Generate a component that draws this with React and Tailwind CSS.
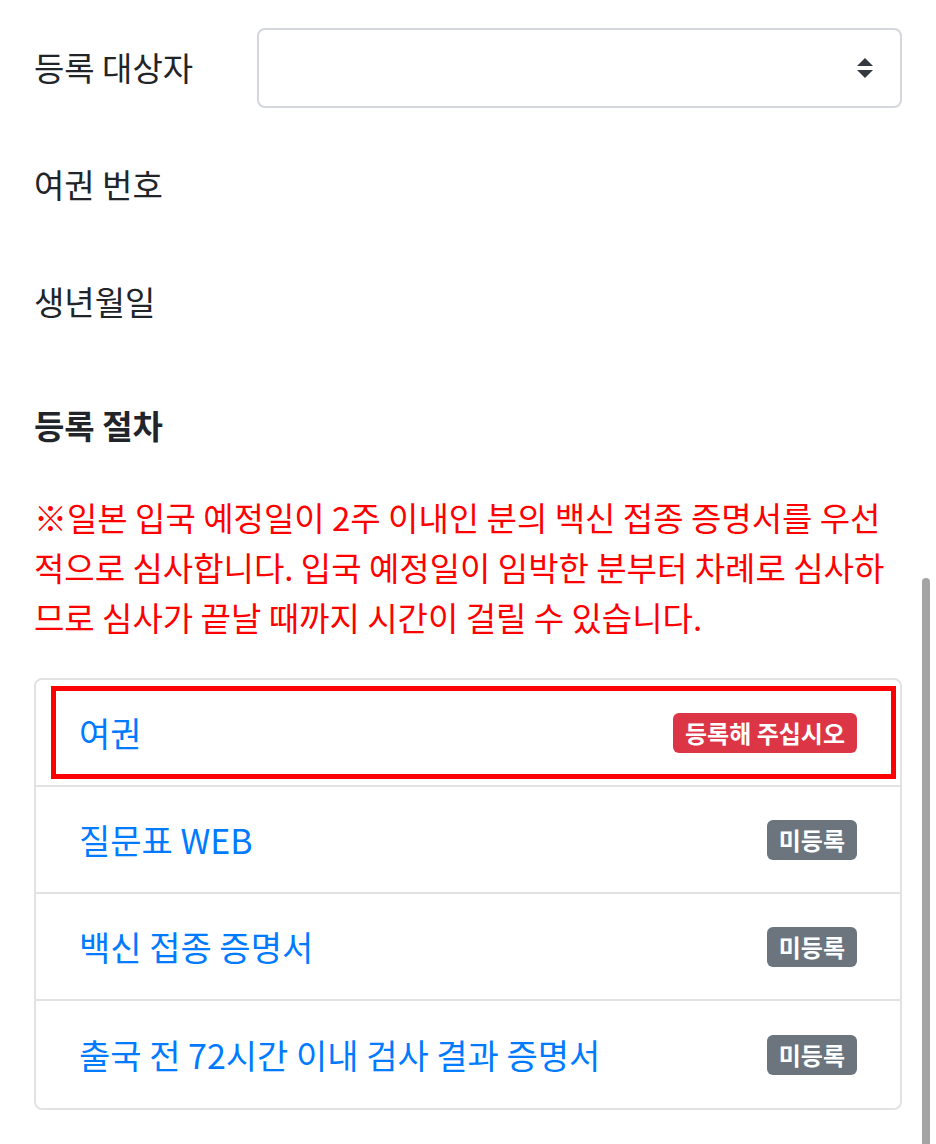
const font = { fontFamily: '"Noto Sans CJK KR", "Noto Sans", sans-serif' }

const steps = [
  { name: '여권', badge: '등록해 주십시오', todo: true },
  { name: '질문표 WEB', badge: '미등록' },
  { name: '백신 접종 증명서', badge: '미등록' },
  { name: '출국 전 72시간 이내 검사 결과 증명서', badge: '미등록' },
]

const FormRow = ({ label, children }) => (
  <div className="flex items-center h-[80px] mb-[37px]">
    <div className="w-[223px] shrink-0 text-[33px] text-[#212529]">{label}</div>
    {children}
  </div>
)

const StepRow = ({ step, last }) => (
  <div className={`h-[107px] flex ${last ? '' : 'border-b-2 border-[#e2e2e2]'}`}>
    <div
      className={`flex-1 ml-[15px] mr-[4px] my-[6px] border-[5px] flex items-center justify-between pl-[23px] pr-[34px] ${
        step.todo ? 'border-[#ff0000]' : 'border-transparent'
      }`}
    >
      <span className="text-[34px] text-[#007bff]">{step.name}</span>
      <span
        className={`h-[40px] flex items-center text-[24px] font-bold text-white px-[12px] rounded-[6px] ${
          step.todo ? 'bg-[#dc3545]' : 'bg-[#6c757d]'
        }`}
      >
        {step.badge}
      </span>
    </div>
  </div>
)

export default function App() {
  return (
    <div className="relative w-[936px] h-[1144px] bg-white overflow-hidden" style={font}>
      <div className="flex flex-col pl-[34px] pr-[34px] pt-[28px]">
        <FormRow label="등록 대상자">
          <div className="flex-1 h-[80px] border-2 border-[#d4d7db] rounded-[8px] flex items-center justify-end pr-[26px]">
            <svg width="18" height="24" viewBox="0 0 18 24">
              <path d="M9 2 L17 10 L1 10 Z" fill="#343a40" />
              <path d="M1 14 L17 14 L9 22 Z" fill="#343a40" />
            </svg>
          </div>
        </FormRow>
        <FormRow label="여권 번호" />
        <FormRow label="생년월일" />

        <h2 className="mt-[21px] h-[50px] leading-[50px] text-[33px] font-bold text-[#212529]">등록 절차</h2>

        <p className="mt-[42px] text-[33px] leading-[50px] text-[#ff0000] whitespace-nowrap">
          ※일본 입국 예정일이 2주 이내인 분의 백신 접종 증명서를 우선
          <br />
          적으로 심사합니다. 입국 예정일이 임박한 분부터 차례로 심사하
          <br />
          므로 심사가 끝날 때까지 시간이 걸릴 수 있습니다.
        </p>

        <div className="mt-[36px] border-2 border-[#e2e2e2] rounded-[8px]">
          {steps.map((s, i) => (
            <StepRow key={s.name} step={s} last={i === steps.length - 1} />
          ))}
        </div>
      </div>

      {/* scroll indicator */}
      <div className="absolute left-[922px] top-[578px] w-[8px] h-[580px] bg-[#a4a4a4] rounded-t-[4px]" />
    </div>
  )
}
